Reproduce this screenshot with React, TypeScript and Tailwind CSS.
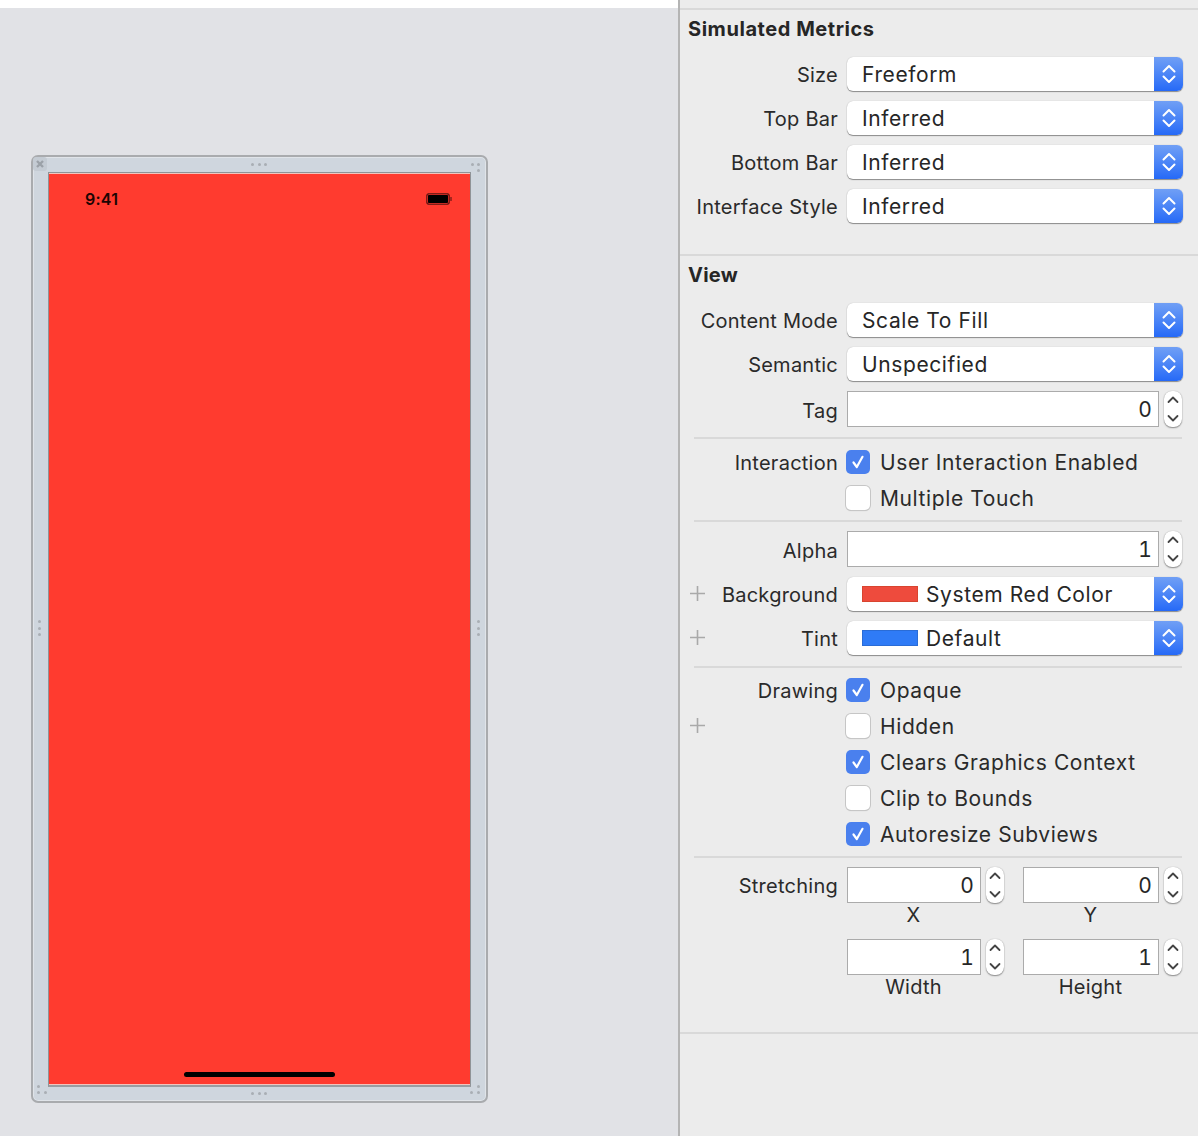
const FONT = "font-['Inter','Liberation_Sans',sans-serif]";

function Dots({ vertical = false }: { vertical?: boolean }) {
  return (
    <div className={`flex gap-[3.5px] ${vertical ? 'flex-col' : ''}`}>
      <span className="w-[3px] h-[3px] rounded-full bg-[#a9aeb4]" />
      <span className="w-[3px] h-[3px] rounded-full bg-[#a9aeb4]" />
      <span className="w-[3px] h-[3px] rounded-full bg-[#a9aeb4]" />
    </div>
  );
}

function CornerDots({ className }: { className: string }) {
  return (
    <div className={`absolute w-[10px] h-[10px] ${className}`}>
      <span className="absolute left-[3px] top-[3px] w-[3px] h-[3px] rounded-full bg-[#a9aeb4]" />
    </div>
  );
}

function Frame() {
  return (
    <div className="relative w-[457px] h-[948px] rounded-[7px] border-2 border-[#a9abae] bg-[#cfd6de] shadow-[inset_0_0_0_1px_rgba(255,255,255,0.35)] pt-[15px] pl-[15px]">
      {/* close box */}
      <div className="absolute left-0 top-0 w-[14px] h-[14px] rounded-[3px] bg-[#c4cbd3] flex items-center justify-center">
        <svg width="10" height="10" viewBox="0 0 10 10" fill="none" stroke="#9ba1a8" strokeWidth="2.4">
          <path d="M2 2l6 6M8 2l-6 6" />
        </svg>
      </div>

      {/* resize handles */}
      <div className="absolute left-[218px] top-[6px]"><Dots /></div>
      <div className="absolute left-[218px] bottom-[6px]"><Dots /></div>
      <div className="absolute left-[5px] top-[463px]"><Dots vertical /></div>
      <div className="absolute right-[6px] top-[463px]"><Dots vertical /></div>
      <CornerDots className="right-[8px] top-[3px]" />
      <CornerDots className="right-[2px] top-[3px]" />
      <CornerDots className="right-[2px] top-[9px]" />
      <CornerDots className="left-[1px] bottom-[9px]" />
      <CornerDots className="left-[1px] bottom-[3px]" />
      <CornerDots className="left-[8px] bottom-[3px]" />
      <CornerDots className="right-[2px] bottom-[9px]" />
      <CornerDots className="right-[2px] bottom-[3px]" />
      <CornerDots className="right-[9px] bottom-[3px]" />

      {/* device */}
      <div className="relative w-[423px] h-[915px] border border-[#8f9397] border-b-2 border-b-[#999da1] bg-[#ff3b2f] shadow-[inset_0_1px_0_#f3c4bd,inset_0_-1px_0_#f3c4bd]">
        <div className="flex items-center justify-between pl-[36px] pr-[18px] pt-[16px]">
          <span className={`${FONT} text-[16px] leading-[20px] font-semibold text-[#1c0503]`}>9:41</span>
          <div className="flex items-center">
            <div className="w-[24px] h-[12px] rounded-[3px] border border-[#7e1d17] bg-black ring-1 ring-[#c22a22] ring-inset" />
            <div className="w-[2px] h-[4px] bg-[#a5251d]" />
          </div>
        </div>
        <div className="absolute left-[135px] bottom-[8px] w-[151px] h-[5px] rounded-full bg-black" />
      </div>
    </div>
  );
}

function Arrows() {
  return (
    <svg width="14" height="20" viewBox="0 0 14 20" fill="none" stroke="#ffffff" strokeWidth="2" strokeLinecap="round" strokeLinejoin="round">
      <path d="M1.5 7.5L7 2l5.5 5.5" />
      <path d="M1.5 12.5L7 18l5.5-5.5" />
    </svg>
  );
}

function Label({ children, plus = false }: { children?: React.ReactNode; plus?: boolean }) {
  return (
    <div className="flex items-center w-[158px] shrink-0">
      <div className="w-0 shrink-0 ml-[10px] -mt-[2px]">
        {plus && (
          <svg width="15" height="15" viewBox="0 0 15 15" stroke="#a9a9a9" strokeWidth="1.6">
            <path d="M7.5 0v15M0 7.5h15" />
          </svg>
        )}
      </div>
      <div className="flex-1 text-right whitespace-nowrap text-[#2a2a2a] pt-[1px]">{children}</div>
    </div>
  );
}

function Popup({ label, value, swatch }: { label: string; value: string; swatch?: 'red' | 'blue' }) {
  return (
    <div className="flex items-center h-[34px]">
      <Label plus={!!swatch}>{label}</Label>
      <div className="ml-[9px] w-[336px] h-[34px] flex rounded-[6px] overflow-hidden bg-white shadow-[0_1px_1px_rgba(0,0,0,0.4),0_0_1px_rgba(0,0,0,0.25)]">
        <div className="flex-1 flex items-center pl-[15px] pt-[1px] text-[#262626] text-[21px] tracking-[0.6px]">
          {swatch === 'red' && <div className="w-[56px] h-[16px] mr-[8px] -mt-[1px] bg-[#ee4b3d] border border-[#d8442f]" />}
          {swatch === 'blue' && <div className="w-[56px] h-[16px] mr-[8px] -mt-[1px] bg-[#2f7bf6] border border-[#2a6cd6]" />}
          {value}
        </div>
        <div className="w-[29px] flex items-center justify-center bg-gradient-to-b from-[#709ff5] to-[#2569f7]">
          <Arrows />
        </div>
      </div>
    </div>
  );
}

function Stepper() {
  return (
    <div className="w-[18px] h-[36px] rounded-[8px] bg-white flex items-center justify-center shadow-[0_1px_1.5px_rgba(0,0,0,0.4),0_0_1px_rgba(0,0,0,0.3)]">
      <svg width="12" height="28" viewBox="0 0 12 28" fill="none" stroke="#444444" strokeWidth="1.8" strokeLinecap="round" strokeLinejoin="round">
        <path d="M1.5 7L6 2.5 10.5 7" />
        <path d="M1.5 21L6 25.5 10.5 21" />
      </svg>
    </div>
  );
}

function NumField({ value, width }: { value: string; width: string }) {
  return (
    <div className={`${width} h-[36px] shrink-0 border border-[#ababab] bg-white flex items-center justify-end pr-[6px] pt-[2px] text-[#262626] text-[21px] tabular-nums`}>
      {value}
    </div>
  );
}

function FieldRow({ label, value }: { label: string; value: string }) {
  return (
    <div className="flex items-center h-[36px]">
      <Label>
        <span className="relative top-[1px]">{label}</span>
      </Label>
      <div className="ml-[9px] flex items-center gap-[5px]">
        <NumField value={value} width="w-[312px]" />
        <Stepper />
      </div>
    </div>
  );
}

function CheckRow({ label, text, checked = false, plus = false }: { label?: string; text: string; checked?: boolean; plus?: boolean }) {
  return (
    <div className="flex items-center h-[36px]">
      <Label plus={plus}>{label}</Label>
      <div className="ml-[8px] flex items-center gap-[10px]">
        {checked ? (
          <div className="w-[24px] h-[24px] rounded-[5px] bg-[#4a80ee] flex items-center justify-center">
            <svg width="16" height="16" viewBox="0 0 16 16" fill="none" stroke="#ffffff" strokeWidth="2.2" strokeLinecap="round" strokeLinejoin="round">
              <path d="M3.5 8.5L6.8 13 12.5 2.8" />
            </svg>
          </div>
        ) : (
          <div className="w-[24px] h-[24px] rounded-[5px] bg-white shadow-[0_0_0_1px_#c6c6c6,0_1px_1px_rgba(0,0,0,0.2)]" />
        )}
        <span className="text-[#2a2a2a] text-[21px] tracking-[0.6px] whitespace-nowrap pt-[1px]">{text}</span>
      </div>
    </div>
  );
}

function Rule() {
  return <div className="ml-[14px] mr-[16px] h-[2px] bg-[#d9d9d9]" />;
}

function SizeField({ value, label, field }: { value: string; label: string; field: string }) {
  return (
    <div className="flex flex-col">
      <div className="flex items-center gap-[5px]">
        <NumField value={value} width={field} />
        <Stepper />
      </div>
      <div className="h-[24px] flex justify-center leading-[24px] text-[#2a2a2a] pr-[25px]">{label}</div>
    </div>
  );
}

export default function App() {
  return (
    <div className={`${FONT} flex w-[1198px] h-[1136px] overflow-hidden text-[20px] leading-[24px] tracking-[0.25px]`}>
      {/* Canvas */}
      <div className="w-[678px] shrink-0 flex flex-col">
        <div className="h-[8px] bg-white" />
        <div className="flex-1 bg-[#e1e2e6] pt-[147px] pl-[31px]">
          <Frame />
        </div>
      </div>
      <div className="w-[2px] shrink-0 bg-[#b4b4b4]" />

      {/* Inspector */}
      <div className="flex-1 bg-[#ececec] flex flex-col pt-[8px]">
        <div className="h-[2px] bg-[#d9d9d9]" />
        <div className="h-[47px] pl-[8px] pt-[7px] font-bold text-[#262626] text-[20px] tracking-[0.55px]">Simulated Metrics</div>
        <div className="flex flex-col gap-[10px]">
          <Popup label="Size" value="Freeform" />
          <Popup label="Top Bar" value="Inferred" />
          <Popup label="Bottom Bar" value="Inferred" />
          <Popup label="Interface Style" value="Inferred" />
        </div>

        <div className="mt-[31px] h-[2px] bg-[#d9d9d9]" />
        <div className="h-[47px] pl-[8px] pt-[7px] font-bold text-[#262626] text-[20px]">View</div>
        <div className="flex flex-col gap-[10px]">
          <Popup label="Content Mode" value="Scale To Fill" />
          <Popup label="Semantic" value="Unspecified" />
          <FieldRow label="Tag" value="0" />
        </div>

        <div className="mt-[10px]"><Rule /></div>
        <div className="mt-[5px]">
          <CheckRow label="Interaction" text="User Interaction Enabled" checked />
          <CheckRow text="Multiple Touch" />
        </div>

        <div className="mt-[4px]"><Rule /></div>
        <div className="mt-[9px] flex flex-col gap-[10px]">
          <FieldRow label="Alpha" value="1" />
          <Popup label="Background" value="System Red Color" swatch="red" />
          <Popup label="Tint" value="Default" swatch="blue" />
        </div>

        <div className="mt-[11px]"><Rule /></div>
        <div className="mt-[4px]">
          <CheckRow label="Drawing" text="Opaque" checked />
          <CheckRow text="Hidden" plus />
          <CheckRow text="Clears Graphics Context" checked />
          <CheckRow text="Clip to Bounds" />
          <CheckRow text="Autoresize Subviews" checked />
        </div>

        <div className="mt-[4px]"><Rule /></div>
        <div className="mt-[9px] flex">
          <div className="h-[36px] flex items-center">
            <Label>Stretching</Label>
          </div>
          <div className="ml-[9px] grid grid-cols-[158px_160px] gap-x-[18px] gap-y-[12px]">
            <SizeField value="0" label="X" field="w-[134px]" />
            <SizeField value="0" label="Y" field="w-[136px]" />
            <SizeField value="1" label="Width" field="w-[134px]" />
            <SizeField value="1" label="Height" field="w-[136px]" />
          </div>
        </div>

        <div className="mt-[33px] h-[2px] bg-[#d9d9d9]" />
      </div>
    </div>
  );
}
